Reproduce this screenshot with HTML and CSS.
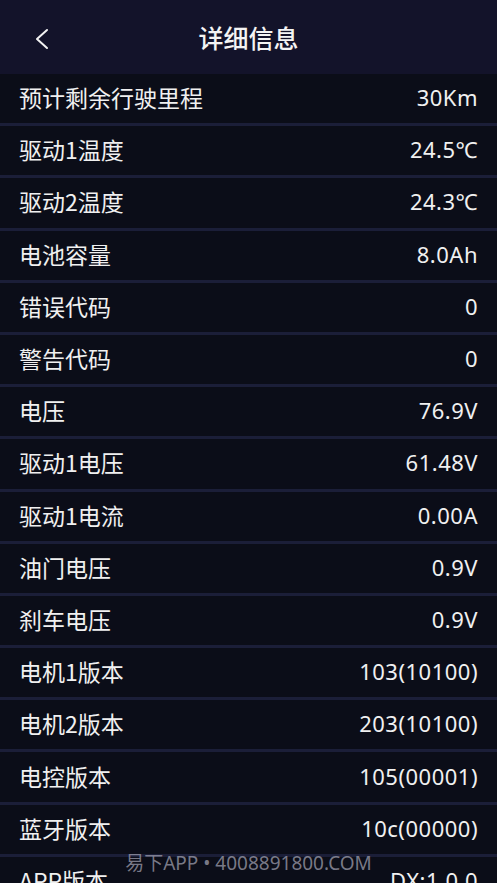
FILE: index.html
```html
<!DOCTYPE html>
<html lang="zh">
<head>
<meta charset="utf-8">
<title>详细信息</title>
<link rel="stylesheet" href="styles.css">
</head>
<body>
<div class="page">
  <header class="topbar">
    <span class="back">
      <svg width="16" height="22" viewBox="0 0 16 22"><path d="M13 2 L3 11 L13 20" fill="none" stroke="#f2f2f2" stroke-width="2" stroke-linecap="round" stroke-linejoin="round"/></svg>
    </span>
    <h1 class="title">详细信息</h1>
  </header>
  <ul class="list">
    <li class="row"><span class="label">预计剩余行驶里程</span><span class="value">30Km</span></li>
    <li class="row"><span class="label">驱动1温度</span><span class="value">24.5℃</span></li>
    <li class="row"><span class="label">驱动2温度</span><span class="value">24.3℃</span></li>
    <li class="row"><span class="label">电池容量</span><span class="value">8.0Ah</span></li>
    <li class="row"><span class="label">错误代码</span><span class="value">0</span></li>
    <li class="row"><span class="label">警告代码</span><span class="value">0</span></li>
    <li class="row"><span class="label">电压</span><span class="value">76.9V</span></li>
    <li class="row"><span class="label">驱动1电压</span><span class="value">61.48V</span></li>
    <li class="row"><span class="label">驱动1电流</span><span class="value">0.00A</span></li>
    <li class="row"><span class="label">油门电压</span><span class="value">0.9V</span></li>
    <li class="row"><span class="label">刹车电压</span><span class="value">0.9V</span></li>
    <li class="row"><span class="label">电机1版本</span><span class="value">103(10100)</span></li>
    <li class="row"><span class="label">电机2版本</span><span class="value">203(10100)</span></li>
    <li class="row"><span class="label">电控版本</span><span class="value">105(00001)</span></li>
    <li class="row"><span class="label">蓝牙版本</span><span class="value">10c(00000)</span></li>
    <li class="row"><span class="label">APP版本</span><span class="value">DX:1.0.0</span></li>
  </ul>
  <div class="watermark">易下APP • 4008891800.COM</div>
</div>
</body>
</html>
```

FILE: styles.css
```css
html, body {
  margin: 0;
  padding: 0;
  background: #0b0d18;
}
body {
  font-family: "Noto Sans", "Noto Sans CJK SC", sans-serif;
  color: #f2f2f2;
  overflow: hidden;
  height: 883px;
}
.page {
  position: relative;
  width: 497px;
  height: 883px;
  overflow: hidden;
}
.topbar {
  height: 74px;
  background: #13132a;
  display: flex;
  align-items: center;
  justify-content: center;
  position: relative;
}
.back {
  position: absolute;
  left: 34px;
  top: 28px;
  width: 16px;
  height: 22px;
}
.back svg { display: block; }
.title {
  margin: 0;
  font-size: 25px;
  font-weight: 500;
  font-family: "Noto Sans CJK SC", sans-serif;
  color: #f4f4f4;
}
.list {
  list-style: none;
  margin: 0;
  padding: 0;
}
.row {
  height: 49.2px;
  border-bottom: 3px solid #1b1e38;
  display: flex;
  align-items: center;
  justify-content: space-between;
  padding: 0 19px;
  background: #0b0d18;
}
.label {
  font-family: "Noto Sans CJK SC", sans-serif;
  font-size: 23px;
  color: #f0f0f0;
  margin-top: -3px;
}
.value {
  font-family: "Noto Sans", "Noto Sans CJK SC", sans-serif;
  font-size: 22px;
  letter-spacing: 0.5px;
  color: #f0f0f0;
  margin-top: -3px;
}
.watermark {
  position: absolute;
  left: 0;
  right: 0;
  top: 848px;
  text-align: center;
  font-family: "Noto Sans", "Noto Sans CJK SC", sans-serif;
  font-size: 19px;
  color: rgba(170, 170, 185, 0.7);
}
```
